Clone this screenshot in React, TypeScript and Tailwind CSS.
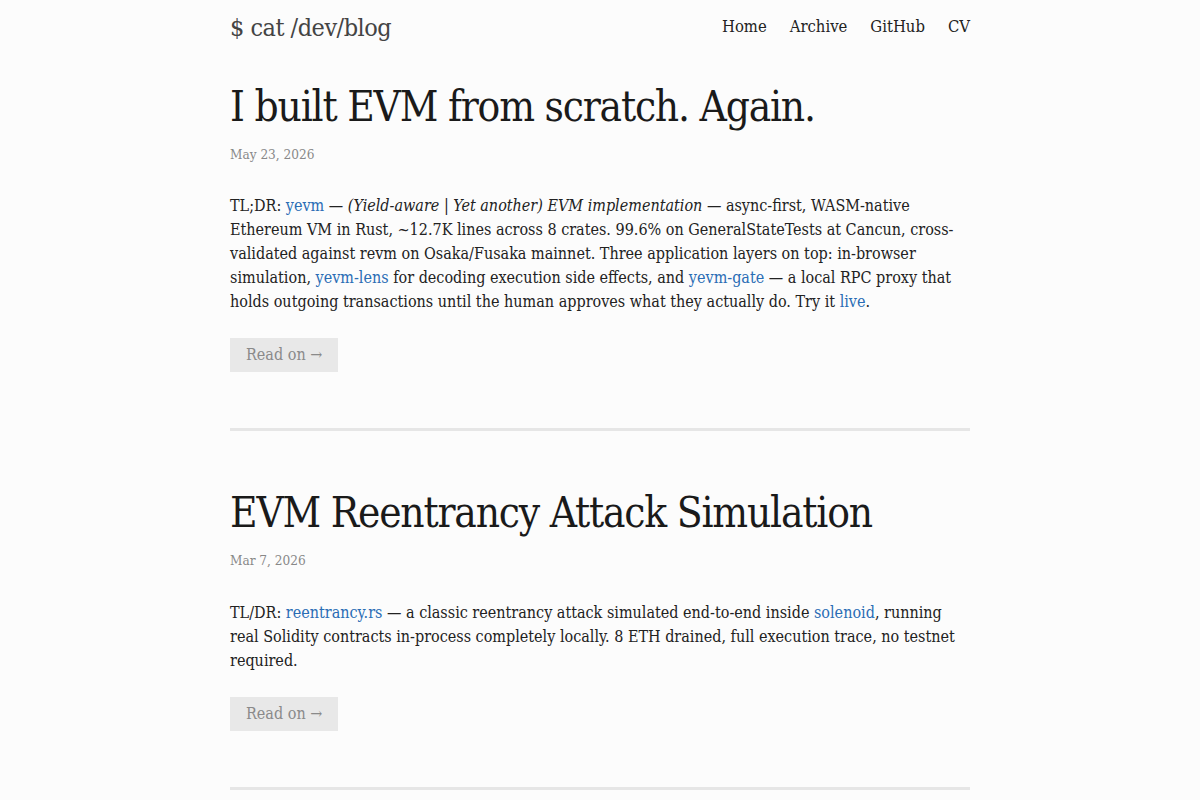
const serif = { fontFamily: '"DejaVu Serif", "Liberation Serif", serif' };

type Part = string | { link: string } | { em: string };

const posts: { title: string; date: string; lead: string; body: Part[] }[] = [
  {
    title: "I built EVM from scratch. Again.",
    date: "May 23, 2026",
    lead: "TL;DR:",
    body: [
      { link: "yevm" },
      " — ",
      { em: "(Yield-aware | Yet another) EVM implementation" },
      " — async-first, WASM-native Ethereum VM in Rust, ~12.7K lines across 8 crates. 99.6% on GeneralStateTests at Cancun, cross-validated against revm on Osaka/Fusaka mainnet. Three application layers on top: in-browser simulation, ",
      { link: "yevm-lens" },
      " for decoding execution side effects, and ",
      { link: "yevm-gate" },
      " — a local RPC proxy that holds outgoing transactions until the human approves what they actually do. Try it ",
      { link: "live" },
      ".",
    ],
  },
  {
    title: "EVM Reentrancy Attack Simulation",
    date: "Mar 7, 2026",
    lead: "TL/DR:",
    body: [
      { link: "reentrancy.rs" },
      " — a classic reentrancy attack simulated end-to-end inside ",
      { link: "solenoid" },
      ", running real Solidity contracts in-process completely locally. 8 ETH drained, full execution trace, no testnet required.",
    ],
  },
];

function Body({ parts }: { parts: Part[] }) {
  return (
    <>
      {parts.map((p, i) =>
        typeof p === "string" ? (
          <span key={i}>{p}</span>
        ) : "link" in p ? (
          <a key={i} href="#" className="text-[#2a6db5]">
            {p.link}
          </a>
        ) : (
          <em key={i}>{p.em}</em>
        )
      )}
    </>
  );
}

export default function App() {
  return (
    <div className="min-h-screen bg-[#fcfcfc] text-[#222] font-stretch-condensed" style={serif}>
      <div className="mx-auto w-[740px]">
        {/* Header */}
        <header className="flex h-[55px] items-center justify-between">
          <a href="#" className="text-[25px] tracking-[-0.5px] text-[#444]">
            $ cat /dev/blog
          </a>
          <nav className="flex gap-[23px] text-[16.5px] text-[#222]">
            <a href="#">Home</a>
            <a href="#">Archive</a>
            <a href="#">GitHub</a>
            <a href="#">CV</a>
          </nav>
        </header>

        {posts.map((post, i) => (
          <article
            key={post.title}
            className={`border-b-[3px] border-[#e6e6e6] pb-[56px] ${i === 0 ? "pt-[26px]" : "pt-[56px]"}`}
          >
            <h1 className="text-[42px] leading-[52px] tracking-[-1.2px] text-[#1a1a1a]">{post.title}</h1>
            <div className="mt-[11px] text-[13.5px] text-[#888]">{post.date}</div>
            <p className="mt-[30px] text-[16px] leading-[24px]">
              {post.lead} <Body parts={post.body} />
            </p>
            <a
              href="#"
              className="mt-[24px] inline-block bg-[#e8e8e8] px-[16px] py-[5px] text-[16px] leading-[24px] text-[#8a8a8a]"
            >
              Read on →
            </a>
          </article>
        ))}
      </div>
    </div>
  );
}
